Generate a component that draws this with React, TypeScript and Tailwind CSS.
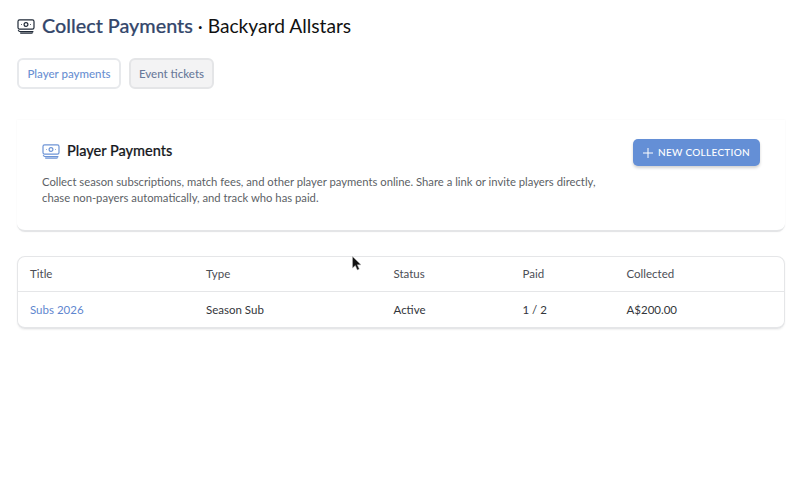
const FONT = "font-['Lato','Noto_Sans',sans-serif]";

// Banknote stack icon used in the headings
const MoneyIcon = ({ className }: { className: string }) => (
  <svg viewBox="0 0 18 15" fill="none" stroke="currentColor" strokeWidth="1.2" className={className}>
    <rect x="1" y="0.8" width="16" height="9.4" rx="1.6" />
    <circle cx="9" cy="5.5" r="1.9" />
    <path d="M4 5.5h.7M13.3 5.5h.7" />
    <path d="M1.2 11.2c.3 1 1 1.4 2 1.4h13.2" />
    <path d="M3.2 14.2h11.2c.6 0 1-.4 1-1" />
  </svg>
);

const columns = ["Title", "Type", "Status", "Paid", "Collected"];

export default function App() {
  return (
    <div className={`${FONT} relative h-[481px] w-[800px] overflow-hidden bg-white px-[17px] pt-[14px]`}>
      <div className="flex h-[24px] items-center">
        <MoneyIcon className="mr-[7px] h-[15px] w-[18px] text-[#1f2937]" />
        <h1 className="leading-6">
          <span className="text-[19.8px] font-medium text-[#34476b] [-webkit-text-stroke:0.2px_#34476b]">Collect Payments</span>
          <span className="text-[19.2px] text-[#111]"> · Backyard Allstars</span>
        </h1>
      </div>

      <div className="mt-[20px] flex gap-[8px]">
        <button className="h-[31px] w-[104px] rounded-[6px] border-2 border-[#e7e9ec] bg-white text-[11.5px] font-medium text-[#6a90d2]">
          Player payments
        </button>
        <button className="h-[31px] w-[85px] rounded-[6px] border-2 border-[#e4e5e7] bg-[#f3f3f4] text-[11.5px] font-medium text-[#6a7a9a]">
          Event tickets
        </button>
      </div>

      <section className="mt-[31px] flex h-[112px] w-[768px] items-start justify-between rounded-b-[8px] border-b-2 border-[#e4e5e7] pl-[25px] pr-[25px] pt-[19px] shadow-[0_0_2px_rgba(0,0,0,0.06)]">
        <div>
          <div className="flex h-[24px] items-center">
            <MoneyIcon className="mr-[7px] h-[15px] w-[18px] text-[#6d94d6]" />
            <h2 className="text-[14.5px] font-medium text-[#16181d] [-webkit-text-stroke:0.2px_#16181d]">Player Payments</h2>
          </div>
          <p className="mt-[11px] w-[570px] text-[11.28px] leading-[15.5px] text-[#5c5f66]">
            Collect season subscriptions, match fees, and other player payments online. Share a link or invite players directly, chase non-payers automatically, and track who has paid.
          </p>
        </div>
        <button className="flex h-[27px] w-[127px] items-center justify-center gap-[5px] rounded-[5px] bg-[#648fd6] text-[10px] font-medium tracking-[0.3px] text-white shadow-[0_2px_3px_rgba(0,0,0,0.18)]">
          <svg viewBox="0 0 10 10" stroke="currentColor" strokeWidth="1" className="h-[10px] w-[10px]">
            <path d="M5 0v10M0 5h10" />
          </svg>
          NEW COLLECTION
        </button>
      </section>

      <div className="mt-[24px] w-[768px] rounded-[8px] border border-[#e5e6e8] border-b-2 shadow-[0_1px_2px_rgba(0,0,0,0.06)]">
        <table className="w-full table-fixed text-left text-[11.5px]">
          <colgroup>
            <col className="w-[188px]" />
            <col className="w-[187.5px]" />
            <col className="w-[129px]" />
            <col className="w-[104px]" />
            <col />
          </colgroup>
          <thead>
            <tr className="h-[34px] border-b border-[#e5e6e8]">
              {columns.map((c, i) => (
                <th key={c} className={`font-normal text-[#4b4e55] ${i === 0 ? "pl-[12px]" : ""}`}>{c}</th>
              ))}
            </tr>
          </thead>
          <tbody>
            <tr className="h-[36px] text-[#33363b]">
              <td className="pl-[12px] text-[#5f87cf]">Subs 2026</td>
              <td>Season Sub</td>
              <td>Active</td>
              <td>1 / 2</td>
              <td>A$200.00</td>
            </tr>
          </tbody>
        </table>
      </div>

      {/* mouse pointer caught in the capture */}
      <svg viewBox="0 0 10 15" className="absolute left-[352px] top-[256px] h-[15px] w-[10px]">
        <path d="M0.5 0.5v11.5l2.8-2.5 2 4.5 2-.9-2-4.3h3.7z" fill="#111" stroke="#bbb" strokeWidth="0.5" />
      </svg>
    </div>
  );
}
